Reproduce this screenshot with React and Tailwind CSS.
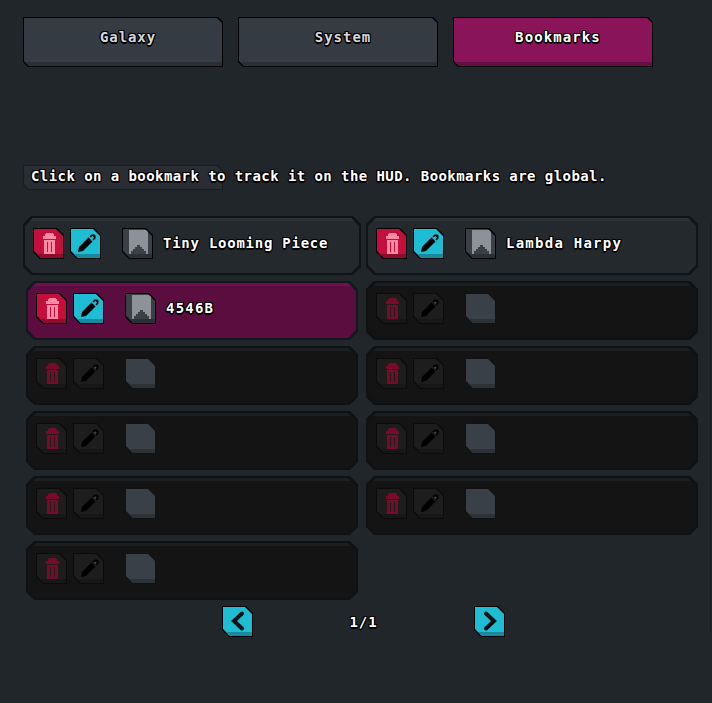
const FONT = "font-['DejaVu_Sans_Mono',monospace] font-bold text-[14px] leading-none [text-shadow:1px_0_0_#000,-1px_0_0_#000,0_1px_0_#000,0_-1px_0_#000,1px_1px_0_#000,-1px_-1px_0_#000,1px_-1px_0_#000,-1px_1px_0_#000,0_2px_0_#000]";
const CUT5 = "[clip-path:polygon(0_0,calc(100%-5px)_0,100%_5px,100%_100%,5px_100%,0_calc(100%-5px))]";
const CUT6 = "[clip-path:polygon(0_0,calc(100%-7px)_0,100%_7px,100%_100%,7px_100%,0_calc(100%-7px))]";
const CUT8 = "[clip-path:polygon(8px_0,calc(100%-8px)_0,100%_8px,100%_calc(100%-8px),calc(100%-8px)_100%,8px_100%,0_calc(100%-8px),0_8px)]";

function Tab({ label, active, track }) {
  return (
    <div className={`w-[200px] h-[50px] p-px bg-black ${CUT5}`}>
      <div className={`h-full flex justify-center pt-[12px] pl-[10px] border-b-[4px] ${CUT5} ${active ? "bg-[#8a145a] border-[#650f45] text-white" : "bg-[#353b43] border-[#2a2f35] text-[#d6d8da]"}`}>
        <span className={`${FONT} ${track}`}>{label}</span>
      </div>
    </div>
  );
}

function Trash({ color, slit }) {
  return (
    <svg width="13" height="21" viewBox="0 0 13 21" shapeRendering="crispEdges">
      <path fill={color} d="M3 0h7v1h1v2h2v3H0V3h2V1h1zM1 7h11v14H1z" />
      <path fill={slit} d="M4 9h1v10H4zM8 9h1v10H8z" />
    </svg>
  );
}

function Pen({ tip }) {
  return (
    <svg width="18" height="18" viewBox="0 0 18 18">
      <path fill="#000" d="M1 13 L10.5 3.5 L14.5 7.5 L5 17 L0 18 Z" />
      <path fill="#000" d="M11.5 2.5 L13.5 0.5 L16.5 0.5 L17.5 1.5 L17.5 4.5 L15.5 6.5 L14.5 5.5 L16 3.5 L14.5 2 L12.5 3.5 Z" />
      <path fill={tip} d="M14 2.5 L15.5 4 L14.5 5 L13 3.5 Z" opacity="0.6" />
    </svg>
  );
}

function Bookmark() {
  return (
    <svg width="19" height="24" viewBox="0 0 19 24" shapeRendering="crispEdges">
      <path fill="#8d9299" d="M0 0h19v24H0z" />
      <path fill="#3a4047" d="M8 15h3v2h2v2h2v2h2v3H2v-3h2v-2h2v-2h2z" />
    </svg>
  );
}

function IconBtn({ face, band, border = "bg-black", shift, children }) {
  return (
    <div className={`w-[31px] h-[31px] p-px shrink-0 ${border} ${CUT6}`}>
      <div className={`h-full flex items-center justify-center border-b-[4px] ${face} ${band} ${CUT6}`}>
        <div className={`flex items-center justify-center mb-[-3px] ${shift ? "ml-[2px]" : ""}`}>{children}</div>
      </div>
    </div>
  );
}

const VARIANTS = {
  filled: {
    outer: "bg-[#0f1417]",
    inner: "bg-[#23292d] border-[#2b3236]",
  },
  active: {
    outer: "bg-[#14181c]",
    inner: "bg-[#5c0d40] border-[#6d1150]",
  },
  empty: {
    outer: "bg-[#0e1214]",
    inner: "bg-[#141414] border-[#1b1f21]",
  },
};

function Row({ variant, name, width = "w-[332px]", track }) {
  const v = VARIANTS[variant];
  const on = variant !== "empty";
  return (
    <div className={`${width} h-[59px] p-[2px] shrink-0 ${v.outer} ${CUT8}`}>
      <div className={`h-full flex items-center gap-[6px] pl-[8px] border-t-[3px] pb-[7px] ${v.inner} ${CUT8}`}>
        <IconBtn
          shift
          face={on ? "bg-[#c30f3d]" : "bg-[#1d1d1d]"}
          band={on ? "border-[#8f0b2d]" : "border-[#171717]"}
          border={on ? "bg-black" : "bg-[#0b0b0b]"}
        >
          <Trash color={on ? "#ff8aa4" : "#770b2a"} slit={on ? "#c30f3d" : "#1d1d1d"} />
        </IconBtn>
        <IconBtn
          shift
          face={on ? "bg-[#1fbdd3]" : "bg-[#1d1d1d]"}
          band={on ? "border-[#178a9d]" : "border-[#171717]"}
          border={on ? "bg-black" : "bg-[#0b0b0b]"}
        >
          <Pen tip={on ? "#1fbdd3" : "#666666"} />
        </IconBtn>
        <div className="w-[9px] shrink-0" />
        {on ? (
          <IconBtn shift face="bg-[#3a4047]" band="border-[#2b3035]">
            <div className="mt-[-2px]">
              <Bookmark />
            </div>
          </IconBtn>
        ) : (
          <IconBtn face="bg-[#3a4047]" band="border-[#2d3237]" border="bg-[#101214]" />
        )}
        {name && <span className={`${FONT} text-white ml-[4px] mb-[2px] ${track}`}>{name}</span>}
      </div>
    </div>
  );
}

function Arrow({ right }) {
  return (
    <svg width="14" height="20" viewBox="0 0 14 20">
      <path
        d={right ? "M3 2.5 L11 10 L3 17.5" : "M11 2.5 L3 10 L11 17.5"}
        fill="none"
        stroke="#0b1014"
        strokeWidth="4"
        strokeLinecap="round"
      />
    </svg>
  );
}

export default function App() {
  return (
    <div className="w-[712px] h-[703px] overflow-hidden bg-[#20262a] pt-[17px] pl-[23px]">
      <div className="flex gap-[15px]">
        <Tab label="Galaxy" track="tracking-[0.9px]" />
        <Tab label="System" track="tracking-[1px]" />
        <Tab label="Bookmarks" active track="tracking-[1.1px]" />
      </div>

      <div className={`mt-[98px] w-[200px] h-[25px] p-px bg-[#191d20] ${CUT5}`}>
        <div className={`h-full bg-[#282e33] ${CUT5}`} />
      </div>
      <div className="relative z-10 mt-[-25px] h-[25px] flex items-center pl-[8px] pb-[3px] whitespace-nowrap">
        <span className={`${FONT} text-white tracking-[0.43px]`}>
          Click on a bookmark to track it on the HUD. Bookmarks are global.
        </span>
      </div>

      <div className="mt-[26px] flex">
        <div className="w-[338px] flex flex-col items-center gap-[6px]">
          <Row variant="filled" width="w-[338px]" name="Tiny Looming Piece" track="tracking-[0.75px]" />
          <Row variant="active" name="4546B" track="tracking-[1.2px]" />
          <Row variant="empty" />
          <Row variant="empty" />
          <Row variant="empty" />
          <Row variant="empty" />
        </div>
        <div className="ml-[5px] w-[332px] flex flex-col gap-[6px]">
          <Row variant="filled" name="Lambda Harpy" track="tracking-[1.25px]" />
          <Row variant="empty" />
          <Row variant="empty" />
          <Row variant="empty" />
          <Row variant="empty" />
        </div>
        <div className="ml-[12px] w-px h-[410px] mt-[6px] mb-[-32px] bg-[#1a1f23]" />
      </div>

      <div className="mt-[6px] ml-[199px] flex items-center">
        <IconBtn face="bg-[#1fbdd3]" band="border-[#178a9d]">
          <Arrow />
        </IconBtn>
        <div className={`w-[221px] text-center text-white ${FONT} tracking-[0.9px]`}>1/1</div>
        <IconBtn face="bg-[#1fbdd3]" band="border-[#178a9d]">
          <Arrow right />
        </IconBtn>
      </div>
    </div>
  );
}
